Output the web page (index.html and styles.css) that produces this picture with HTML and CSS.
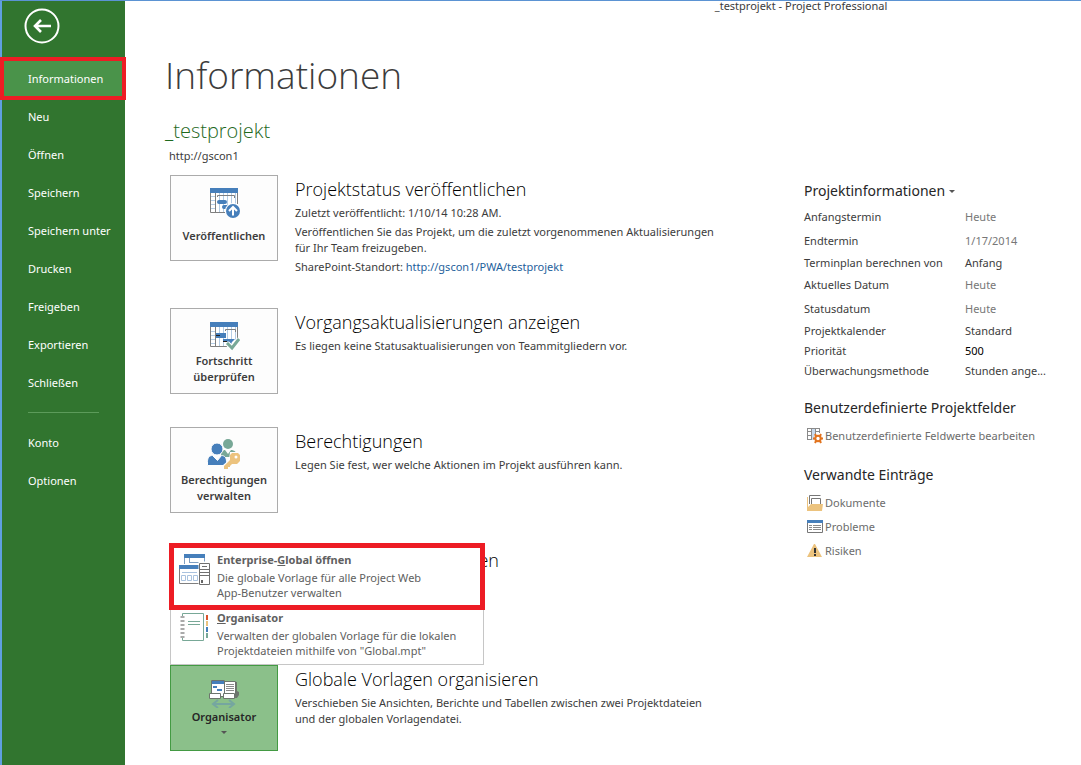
FILE: index.html
```html
<!DOCTYPE html>
<html lang="de">
<head>
<meta charset="utf-8">
<title>_testprojekt - Project Professional</title>
<link rel="stylesheet" href="styles.css">
</head>
<body>
<div class="app">
  <aside class="sidebar">
    <button class="back" type="button" aria-label="Zurück">
      <svg width="36" height="36" viewBox="0 0 36 36" fill="none" stroke="#fff">
        <circle cx="18" cy="18" r="16.500" stroke-width="2"/>
        <path d="M27 18H11M17 12 11 18l6 6" stroke-width="2.600"/>
      </svg>
    </button>
    <nav class="nav">
      <a class="nav-item active" href="#">Informationen</a>
      <a class="nav-item" href="#">Neu</a>
      <a class="nav-item" href="#">Öffnen</a>
      <a class="nav-item" href="#">Speichern</a>
      <a class="nav-item" href="#">Speichern unter</a>
      <a class="nav-item" href="#">Drucken</a>
      <a class="nav-item" href="#">Freigeben</a>
      <a class="nav-item" href="#">Exportieren</a>
      <a class="nav-item" href="#">Schließen</a>
      <hr class="nav-line">
      <a class="nav-item" href="#">Konto</a>
      <a class="nav-item" href="#">Optionen</a>
    </nav>
  </aside>

  <div class="page">
    <header class="titlebar">_testprojekt - Project Professional</header>
    <main class="content">
      <div class="left">
        <h1>Informationen</h1>
        <h2 class="project">_testprojekt</h2>
        <p class="server">http://gscon1</p>

        <section class="row tall">
          <button class="tile" type="button">
            <svg width="32" height="32" viewBox="0 0 32 32">
              <path fill="#fff" d="M2 2h28v25H2z"/>
              <path stroke="#b4cde6" fill="none" d="M3 10.500h4M3 14.500h4M3 18.500h4M3 22.500h4M11.500 7v19M15.500 7v19M19.500 7v19M23.500 7v19M27.500 7v14"/>
              <path stroke="#7f7f7f" fill="none" d="M2.500 7v19.500H17M7.500 7v19M29.500 7v11M9.500 11V9.500h17V12"/>
              <path fill="#467fbb" d="M2 2h28v5H2z"/>
              <rect x="9" y="14" width="10" height="4" rx="2" fill="#467fbb"/>
              <rect x="14" y="19" width="8" height="4" rx="2" fill="#467fbb"/>
              <circle cx="25" cy="25" r="8" fill="#fff"/><circle cx="25" cy="25" r="7" fill="#467fbb"/>
              <path d="M25 29.500v-8M21 25l4-4 4 4" stroke="#fff" stroke-width="2" fill="none"/>
            </svg>
            <span>Veröffentlichen</span>
          </button>
          <div class="text">
            <h3>Projektstatus veröffentlichen</h3>
            <p>Zuletzt veröffentlicht: 1/10/14 10:28 AM.</p>
            <p>Veröffentlichen Sie das Projekt, um die zuletzt vorgenommenen Aktualisierungen<br>für Ihr Team freizugeben.</p>
            <p>SharePoint-Standort: <a href="#">http://gscon1/PWA/testprojekt</a></p>
          </div>
        </section>

        <section class="row">
          <button class="tile" type="button">
            <svg width="32" height="32" viewBox="0 0 32 32">
              <path fill="#fff" d="M2 3h28v25H2z"/>
              <path stroke="#b4cde6" fill="none" d="M3 12.500h4M3 16.500h4M3 20.500h4M3 24.500h4M11.500 8v19M15.500 8v19M19.500 8v19M23.500 8v19M27.500 8v14"/>
              <path stroke="#7f7f7f" fill="none" d="M2.500 8v19.500H19M7.500 8v19M29.500 8v11M17.500 12V10.500h10V13"/>
              <path fill="#467fbb" d="M2 3h28v5H2zM8 14h10v5H8zM15 20h12l-5 5-3-3h-4z"/>
              <path stroke="#222" d="M8 16.500h4M15 22.500h4"/>
              <path d="M19 24l5 5 7-9" stroke="#fff" stroke-width="5" fill="none"/>
              <path d="M19 24l5 5 7-9" stroke="#78a897" stroke-width="3" fill="none"/>
            </svg>
            <span>Fortschritt<br>überprüfen</span>
          </button>
          <div class="text">
            <h3>Vorgangsaktualisierungen anzeigen</h3>
            <p>Es liegen keine Statusaktualisierungen von Teammitgliedern vor.</p>
          </div>
        </section>

        <section class="row">
          <button class="tile" type="button">
            <svg width="34" height="32" viewBox="0 0 34 32">
              <g fill="#78a897"><circle cx="21" cy="6" r="5"/><path d="M14 18c0-4 2-6 4-6l3 4 3-4c3 0 6 2 6 6v1H14z"/></g>
              <g fill="#467fbb" stroke="#fdfdfd"><circle cx="10" cy="11" r="6"/><path d="M.5 27.500v-4c0-4 2-6 5-6l5 5 4-5c3 0 5 2 5 6v4z"/></g>
              <path d="M23 14h8l3 3v6l-4 4h-4l-4 4h-6v-4l6-5z" fill="#fdfdfd"/>
              <path d="M25 15h6l2 2v6l-3 3h-5l-2 2v1h-2v2h-4v-3l6-6v-5z" fill="#ecc37e"/><circle cx="29" cy="19" r="1.500" fill="#fff"/>
            </svg>
            <span>Berechtigungen<br>verwalten</span>
          </button>
          <div class="text">
            <h3>Berechtigungen</h3>
            <p>Legen Sie fest, wer welche Aktionen im Projekt ausführen kann.</p>
          </div>
        </section>

        <section class="row">
          <div class="text covered"><h3>en</h3></div>
        </section>

        <section class="row last">
          <div class="menu">
            <button class="menu-item marked" type="button">
              <svg width="32" height="34" viewBox="0 -2 32 34" fill="none">
                <path fill="#fff" d="M5 0h21v15H5z"/>
                <path stroke="#7f9fc2" d="M5.500 4v6M10.500 4v5M25.500 4v4M10.500 8.500h15"/>
                <path fill="#467fbb" d="M5 0h21v4H5z"/>
                <path fill="#fff" stroke="#7f7f7f" d="M.5 12v17.500h21V12"/>
                <path fill="#467fbb" d="M0 11h20v4H0z"/>
                <path stroke="#a9c2df" d="M3 18.500h15M2.500 21.500h4v5h-4zM8.500 21.500h4v5h-4zM14.500 21.500h4v5h-4z"/>
                <path stroke="#fff" fill="#fff" stroke-width="3" d="M21 9h9v21h-9z"/>
                <path fill="#fff" stroke="#707070" d="M20.500 9.500h10v21h-10zM23 12.500h5M21 15.500h9M21 18.500h9M21 21.500h9"/>
                <path fill="#666" d="M22 26h2v3h-2z"/>
              </svg>
              <span class="menu-text"><b>Enterprise-<u>G</u>lobal öffnen</b><span>Die globale Vorlage für alle Project Web<br>App-Benutzer verwalten</span></span>
            </button>
            <button class="menu-item" type="button">
              <svg width="32" height="32" viewBox="0 0 32 32" fill="none">
                <path stroke="#78a897" d="M3.500 3.500h21v27h-21zM9 11.500h12M9 14.500h12"/>
                <path stroke="#fff" stroke-width="4" d="M3.500 6v22"/><path stroke="#aaa" stroke-width="4" stroke-dasharray="2 2" d="M3.500 6v22"/>
                <path fill="#d9532c" d="M27 5h2v5h-2z"/><path fill="#ecc37e" d="M27 11h2v5h-2z"/><path fill="#467fbb" d="M27 17h2v5h-2z"/><path fill="#78a897" d="M27 23h2v5h-2z"/>
              </svg>
              <span class="menu-text"><b><u>O</u>rganisator</b><span>Verwalten der globalen Vorlage für die lokalen<br>Projektdateien mithilfe von "Global.mpt"</span></span>
            </button>
          </div>
          <button class="tile open" type="button" aria-expanded="true">
            <svg width="32" height="32" viewBox="0 -4 32 32" fill="none">
              <path fill="#fff" stroke="#6d756d" d="M3.500 .5h13v16h-13zM16.500 1.500h11v15h-11z"/>
              <path fill="#6d756d" d="M28 2h1v9l2 1v3l-2 3h-2z"/>
              <path fill="#467fbb" d="M4 1h12v3H4zM5 6h4v2H5zM9 9h5v2H9z"/>
              <path stroke="#8b8b8b" d="M18 4.500h8M18 6.500h8M18 8.500h8M18 10.500h8"/>
              <path fill="#fff" stroke="#6d756d" d="M1.500 13.500h11v5h-11zM15.500 13.500h11v5h-11z"/>
              <path stroke="#75a6a0" stroke-width="2" d="M5 24h21M10 20l-5 4 5 4M21 20l5 4-5 4"/>
            </svg>
            <span>Organisator</span>
            <i class="caret"></i>
          </button>
          <div class="text">
            <h3>Globale Vorlagen organisieren</h3>
            <p>Verschieben Sie Ansichten, Berichte und Tabellen zwischen zwei Projektdateien<br>und der globalen Vorlagendatei.</p>
          </div>
        </section>
      </div>

      <aside class="info">
        <button class="info-head" type="button">Projektinformationen <i class="caret"></i></button>
        <table class="facts">
          <tbody>
            <tr class="roomy"><th scope="row">Anfangstermin</th><td class="dim">Heute</td></tr>
            <tr class="roomy"><th scope="row">Endtermin</th><td class="dim">1/17/2014</td></tr>
            <tr><th scope="row">Terminplan berechnen von</th><td>Anfang</td></tr>
            <tr class="roomy"><th scope="row">Aktuelles Datum</th><td class="dim">Heute</td></tr>
            <tr class="roomy"><th scope="row">Statusdatum</th><td class="dim">Heute</td></tr>
            <tr><th scope="row">Projektkalender</th><td>Standard</td></tr>
            <tr><th scope="row">Priorität</th><td class="strong">500</td></tr>
            <tr><th scope="row">Überwachungsmethode</th><td>Stunden ange...</td></tr>
          </tbody>
        </table>

        <h4>Benutzerdefinierte Projektfelder</h4>
        <a class="link" href="#">
          <svg width="16" height="16" viewBox="0 0 16 16" fill="none">
            <path fill="#c7d9ec" d="M4 1h5v11H4z"/>
            <path stroke="#8a8a8a" d="M0 .5h13M.5 0v12M4.500 0v12M8.500 0v6M12.500 0v5M0 3.500h4M9 3.500h4M0 7.500h4M0 11.500h5"/>
            <circle cx="11" cy="10.500" r="4" fill="#fff"/>
            <circle cx="11" cy="10.500" r="2.700" stroke="#e2731d" stroke-width="2"/>
            <path stroke="#e2731d" stroke-width="2" d="M9 8 8 6M13 8l1-2M9 13l-1 2M13 13l1 2M6 10.500h2M14 10.500h2"/>
          </svg>Benutzerdefinierte Feldwerte bearbeiten</a>

        <h4>Verwandte Einträge</h4>
        <a class="link" href="#">
          <svg width="16" height="16" viewBox="0 0 16 16" fill="none">
            <path stroke="#777" d="M2.500 9V.5h11M4.500 9V3.500h9V9"/>
            <path fill="#ecc37e" d="M0 2h1v10l3-3h12l-1 7H0z"/>
          </svg>Dokumente</a>
        <a class="link" href="#">
          <svg width="16" height="16" viewBox="0 0 16 16" fill="none">
            <path fill="#fff" stroke="#777" d="M.5 2.500h15v11H.5z"/><path fill="#467fbb" d="M0 1h16v3H0z"/>
            <path stroke="#8a8a8a" d="M2 6.500h3M2 8.500h3M2 10.500h3M6 6.500h8M6 8.500h8M6 10.500h8"/>
          </svg>Probleme</a>
        <a class="link" href="#">
          <svg width="16" height="16" viewBox="0 0 16 16">
            <path fill="#ecc37e" d="M7 1h1l7 13H0z"/><path fill="#333" d="M7 5h2v5H7zM7 11h2v2H7z"/>
          </svg>Risiken</a>
      </aside>
    </main>
  </div>
</div>
</body>
</html>
```
FILE: styles.css
```css
* { box-sizing: border-box; }
body {
  margin: 0;
  background: #fff;
  color: #3c3c3c;
  font: 11px/16px "Noto Sans", "Open Sans", sans-serif;
}
h1, h2, h3, h4, p { margin: 0; font-weight: 400; }
button { margin: 0; font: inherit; color: inherit; }
svg { display: block; flex: none; }
.app {
  display: grid;
  grid-template-columns: 125px minmax(0, 1fr);
  min-height: 100vh;
  border-top: 1px solid #5b93d3;
}

.sidebar { background: #31752f; border-left: 2px solid #5f9fe0; }
.back { display: block; margin: 7px 0 13px 22px; padding: 0; border: 0; background: none; }
.nav { display: flex; flex-direction: column; }
.nav-item { padding: 11px 0 11px 26px; color: #fff; text-decoration: none; white-space: nowrap; }
.nav-item.active {
  margin: 0 -1px -1px -2px;
  padding: 10px 0 9px 24px;
  border: 4px solid #ed1c24;
  background: #4a934a;
}
.nav-item.active + .nav-item { padding-top: 10px; }
.nav-line { width: 71px; height: 1px; margin: 10px 0 11px 26px; border: 0; background: #5c9b5a; }

.page { display: flex; flex-direction: column; }
.titlebar { padding-left: 396px; height: 14px; line-height: 10px; text-align: center; }
.content {
  display: grid;
  grid-template-columns: minmax(0, 1fr) 253px;
  padding: 0 24px 0 40px;
}
h1, .project, .text h3 { font-family: "Open Sans", sans-serif; font-weight: 300; }
h1 { margin-top: 32px; color: #3c3c3c; font-size: 37px; line-height: 56px; }
.project { margin-top: 14px; color: #1f691d; font-size: 20px; line-height: 28px; }
.server { margin: 3px 0 11px 4px; }

.row { position: relative; display: flex; gap: 17px; min-height: 119px; padding-left: 5px; }
.row.tall { min-height: 133px; }
.row.last { min-height: 86px; }
.tile {
  display: flex;
  flex: none;
  flex-direction: column;
  align-items: center;
  gap: 10px;
  width: 108px;
  height: 86px;
  padding: 10px 0 0;
  border: 1px solid #ababab;
  background: #fdfdfd;
  font-weight: 600;
  text-align: center;
}
.row:not(.tall) .tile { gap: 2px; }
.row .tile.open { gap: 1px; border-color: #439a43; background: #8bc08a; color: #262626; }
.caret {
  display: inline-block;
  border: 3px solid transparent;
  border-top-color: #555;
  border-bottom: 0;
}
.tile .caret { margin-top: 5px; }
.text h3 { margin-bottom: 2px; color: #000; font-size: 18px; line-height: 28px; }
.text p { margin-bottom: 3px; }
.text a { color: #1e5f9c; text-decoration: none; }
.covered { width: 329px; text-align: right; }

.menu {
  position: absolute;
  left: 5px;
  bottom: 86px;
  width: 314px;
  border: 1px solid #c6c6c6;
  background: #fff;
  color: #606060;
}
.menu-item {
  display: flex;
  gap: 6px;
  width: 100%;
  padding: 0 8px 6px;
  border: 0;
  background: none;
  line-height: 15px;
  text-align: left;
}
.menu-item b { font-weight: 700; }
.menu-item.marked {
  width: calc(100% + 4px);
  margin: -3px -2px 0;
  padding: 4px 5px 5px;
  border: 5px solid #ed1c24;
}
.menu-text { display: flex; flex-direction: column; gap: 3px; }

.info { padding-top: 162px; }
.info-head, h4 { color: #262626; font-size: 14px; line-height: 28px; }
.info-head { display: flex; align-items: center; gap: 4px; padding: 0; border: 0; background: none; }
.facts { border-collapse: collapse; }
.facts th, .facts td { height: 20px; padding: 0; font-weight: 400; text-align: left; }
.facts th { width: 161px; }
.facts .roomy > * { height: 24px; }
.facts .dim { color: #777; }
.facts .strong { color: #000; }
.facts td { white-space: nowrap; }
h4 { margin: 13px 0 2px; }
.link { display: flex; align-items: center; gap: 2px; height: 24px; padding-left: 3px; color: #6c6c6c; text-decoration: none; }
```
